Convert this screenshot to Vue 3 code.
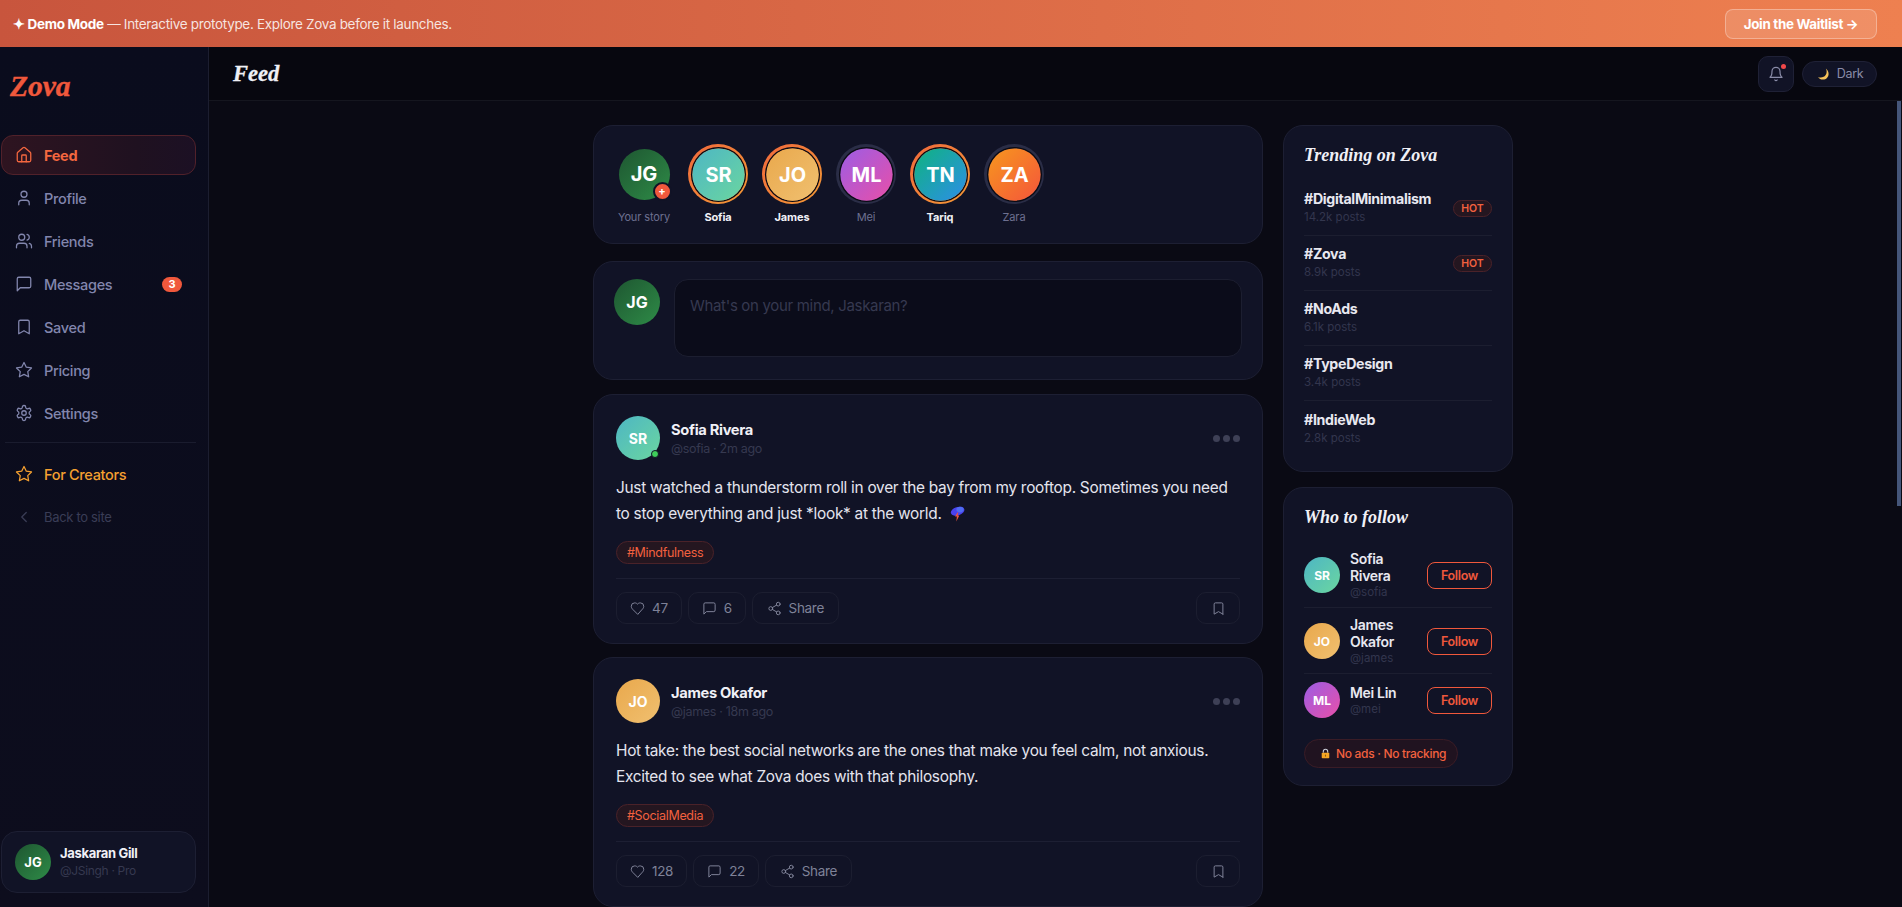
<script setup>
const icons = {
  home: '<path d="M15 21v-8a1 1 0 0 0-1-1h-4a1 1 0 0 0-1 1v8"/><path d="M3 10a2 2 0 0 1 .709-1.528l7-5.999a2 2 0 0 1 2.582 0l7 5.999A2 2 0 0 1 21 10v9a2 2 0 0 1-2 2H5a2 2 0 0 1-2-2z"/>',
  user: '<path d="M19 21v-2a4 4 0 0 0-4-4H9a4 4 0 0 0-4 4v2"/><circle cx="12" cy="7" r="4"/>',
  users: '<path d="M16 21v-2a4 4 0 0 0-4-4H6a4 4 0 0 0-4 4v2"/><circle cx="9" cy="7" r="4"/><path d="M22 21v-2a4 4 0 0 0-3-3.87"/><path d="M16 3.13a4 4 0 0 1 0 7.75"/>',
  message: '<path d="M21 15a2 2 0 0 1-2 2H7l-4 4V5a2 2 0 0 1 2-2h14a2 2 0 0 1 2 2z"/>',
  bookmark: '<path d="m19 21-7-4-7 4V5a2 2 0 0 1 2-2h10a2 2 0 0 1 2 2v16z"/>',
  star: '<polygon points="12 2 15.09 8.26 22 9.27 17 14.14 18.18 21.02 12 17.77 5.82 21.02 7 14.14 2 9.27 8.91 8.26 12 2"/>',
  settings: '<path d="M12.22 2h-.44a2 2 0 0 0-2 2v.18a2 2 0 0 1-1 1.73l-.43.25a2 2 0 0 1-2 0l-.15-.08a2 2 0 0 0-2.73.73l-.22.38a2 2 0 0 0 .73 2.73l.15.1a2 2 0 0 1 1 1.72v.51a2 2 0 0 1-1 1.74l-.15.09a2 2 0 0 0-.73 2.73l.22.38a2 2 0 0 0 2.73.73l.15-.08a2 2 0 0 1 2 0l.43.25a2 2 0 0 1 1 1.73V20a2 2 0 0 0 2 2h.44a2 2 0 0 0 2-2v-.18a2 2 0 0 1 1-1.73l.43-.25a2 2 0 0 1 2 0l.15.08a2 2 0 0 0 2.73-.73l.22-.39a2 2 0 0 0-.73-2.73l-.15-.08a2 2 0 0 1-1-1.74v-.5a2 2 0 0 1 1-1.74l.15-.09a2 2 0 0 0 .73-2.73l-.22-.38a2 2 0 0 0-2.73-.73l-.15.08a2 2 0 0 1-2 0l-.43-.25a2 2 0 0 1-1-1.73V4a2 2 0 0 0-2-2z"/><circle cx="12" cy="12" r="3"/>',
  back: '<path d="m15 18-6-6 6-6"/>',
  bell: '<path d="M6 8a6 6 0 0 1 12 0c0 7 3 9 3 9H3s3-2 3-9"/><path d="M10.3 21a1.94 1.94 0 0 0 3.4 0"/>',
  heart: '<path d="M19 14c1.49-1.46 3-3.21 3-5.5A5.5 5.5 0 0 0 16.5 3c-1.76 0-3 .5-4.5 2-1.5-1.5-2.74-2-4.5-2A5.5 5.5 0 0 0 2 8.5c0 2.3 1.5 4.05 3 5.5l7 7Z"/>',
  share: '<circle cx="18" cy="5" r="3"/><circle cx="6" cy="12" r="3"/><circle cx="18" cy="19" r="3"/><line x1="8.59" y1="13.51" x2="15.42" y2="17.49"/><line x1="15.41" y1="6.51" x2="8.59" y2="10.49"/>',
};

const grads = {
  JG: "linear-gradient(135deg, #1e5631, #2e8b47)",
  SR: "linear-gradient(135deg, #4db6c4, #6bd6a0)",
  JO: "linear-gradient(135deg, #e9a84c, #f0c070)",
  ML: "linear-gradient(135deg, #9b5de5, #e94fa8)",
  TN: "linear-gradient(135deg, #0fb37f, #2d8ee8)",
  ZA: "linear-gradient(135deg, #f7971e, #f4553b)",
};

const navItems = [
  { label: "Feed", icon: "home", active: true },
  { label: "Profile", icon: "user" },
  { label: "Friends", icon: "users" },
  { label: "Messages", icon: "message", badge: 3 },
  { label: "Saved", icon: "bookmark" },
  { label: "Pricing", icon: "star" },
  { label: "Settings", icon: "settings" },
];

const stories = [
  { initials: "SR", name: "Sofia", fresh: true },
  { initials: "JO", name: "James", fresh: true },
  { initials: "ML", name: "Mei", fresh: false },
  { initials: "TN", name: "Tariq", fresh: true },
  { initials: "ZA", name: "Zara", fresh: false },
];

const posts = [
  {
    initials: "SR",
    name: "Sofia Rivera",
    meta: "@sofia · 2m ago",
    online: true,
    text: "Just watched a thunderstorm roll in over the bay from my rooftop. Sometimes you need to stop everything and just *look* at the world.",
    storm: true,
    tag: "#Mindfulness",
    likes: 47,
    comments: 6,
  },
  {
    initials: "JO",
    name: "James Okafor",
    meta: "@james · 18m ago",
    online: false,
    text: "Hot take: the best social networks are the ones that make you feel calm, not anxious. Excited to see what Zova does with that philosophy.",
    storm: false,
    tag: "#SocialMedia",
    likes: 128,
    comments: 22,
  },
];

const trending = [
  { tag: "#DigitalMinimalism", count: "14.2k posts", hot: true },
  { tag: "#Zova", count: "8.9k posts", hot: true },
  { tag: "#NoAds", count: "6.1k posts", hot: false },
  { tag: "#TypeDesign", count: "3.4k posts", hot: false },
  { tag: "#IndieWeb", count: "2.8k posts", hot: false },
];

const suggestions = [
  { initials: "SR", name: "Sofia Rivera", handle: "@sofia" },
  { initials: "JO", name: "James Okafor", handle: "@james" },
  { initials: "ML", name: "Mei Lin", handle: "@mei" },
];
</script>

<template>
  <div class="page">
    <div class="banner">
      <p class="banner-text"><strong>✦ Demo Mode</strong> — Interactive prototype. Explore Zova before it launches.</p>
      <button class="waitlist">Join the Waitlist →</button>
    </div>

    <div class="shell">
      <aside class="sidebar">
        <div class="logo">Zova</div>
        <nav class="nav">
          <a v-for="item in navItems" :key="item.label" class="nav-item" :class="{ active: item.active }">
            <svg class="ico nav-ico" viewBox="0 0 24 24"><g v-html="icons[item.icon]" /></svg>
            <span>{{ item.label }}</span>
            <span v-if="item.badge" class="nav-badge">{{ item.badge }}</span>
          </a>
        </nav>
        <div class="nav-divider"></div>
        <a class="nav-item creators">
          <svg class="ico nav-ico" viewBox="0 0 24 24"><g v-html="icons.star" /></svg>
          <span>For Creators</span>
        </a>
        <a class="nav-item back">
          <svg class="ico nav-ico" viewBox="0 0 24 24"><g v-html="icons.back" /></svg>
          <span>Back to site</span>
        </a>
        <div class="me">
          <div class="avatar me-avatar" :style="{ background: grads.JG }">JG</div>
          <div>
            <div class="me-name">Jaskaran Gill</div>
            <div class="me-sub">@JSingh · Pro</div>
          </div>
        </div>
      </aside>

      <div class="main">
        <header class="topbar">
          <h1 class="page-title">Feed</h1>
          <div class="top-actions">
            <button class="bell">
              <svg class="ico bell-ico" viewBox="0 0 24 24"><g v-html="icons.bell" /></svg>
              <span class="bell-dot"></span>
            </button>
            <button class="theme">
              <svg class="moon" viewBox="0 0 16 16">
                <path d="M11.2 1.6c1.9 3.3 1 7.6-2.5 9.6-2 1.1-4.4 1.1-6.4.2 1.2 1.9 3.4 3.1 5.7 3 3.6 0 6.4-2.9 6.4-6.4 0-2.8-1.5-5.2-3.2-6.4z" fill="#f6c25a" />
              </svg>
              Dark
            </button>
          </div>
        </header>

        <div class="scroll">
          <div class="columns">
            <section class="feed">
              <div class="card stories">
                <div class="story">
                  <div class="story-ring plain">
                    <div class="avatar story-own" :style="{ background: grads.JG }">
                      JG
                      <span class="story-plus">+</span>
                    </div>
                  </div>
                  <span class="story-name">Your story</span>
                </div>
                <div v-for="s in stories" :key="s.initials" class="story">
                  <div class="story-ring" :class="s.fresh ? 'fresh' : 'seen'">
                    <div class="avatar story-avatar" :style="{ background: grads[s.initials] }">{{ s.initials }}</div>
                  </div>
                  <span class="story-name" :class="{ unread: s.fresh }">{{ s.name }}</span>
                </div>
              </div>

              <div class="card compose">
                <div class="avatar compose-avatar" :style="{ background: grads.JG }">JG</div>
                <div class="compose-box">What's on your mind, Jaskaran?</div>
              </div>

              <article v-for="post in posts" :key="post.name" class="card post">
                <div class="post-head">
                  <div class="avatar post-avatar" :style="{ background: grads[post.initials] }">
                    {{ post.initials }}
                    <span v-if="post.online" class="online"></span>
                  </div>
                  <div class="post-who">
                    <div class="post-name">{{ post.name }}</div>
                    <div class="post-meta">{{ post.meta }}</div>
                  </div>
                  <div class="post-more"><i></i><i></i><i></i></div>
                </div>
                <p class="post-text">
                  {{ post.text }}
                  <svg v-if="post.storm" class="storm" viewBox="0 0 16 16">
                    <ellipse cx="8.6" cy="5.2" rx="7" ry="4.2" transform="rotate(-18 8.6 5.2)" fill="#4a42ee" />
                    <ellipse cx="11" cy="3.6" rx="3.6" ry="2.8" fill="#4f6cf2" />
                    <path d="M8.6 6.6 6 10.6h1.9L7.3 15.6l3-6H8.5l.9-3z" fill="#f0563c" />
                  </svg>
                </p>
                <span class="post-tag">{{ post.tag }}</span>
                <div class="post-actions">
                  <button class="act">
                    <svg class="ico act-ico" viewBox="0 0 24 24"><g v-html="icons.heart" /></svg>
                    {{ post.likes }}
                  </button>
                  <button class="act">
                    <svg class="ico act-ico" viewBox="0 0 24 24"><g v-html="icons.message" /></svg>
                    {{ post.comments }}
                  </button>
                  <button class="act act-share">
                    <svg class="ico act-ico" viewBox="0 0 24 24"><g v-html="icons.share" /></svg>
                    Share
                  </button>
                  <button class="act act-save">
                    <svg class="ico act-ico" viewBox="0 0 24 24"><g v-html="icons.bookmark" /></svg>
                  </button>
                </div>
              </article>
            </section>

            <aside class="rail">
              <div class="card widget">
                <h3 class="widget-title">Trending on Zova</h3>
                <div v-for="t in trending" :key="t.tag" class="trend">
                  <div>
                    <div class="trend-tag">{{ t.tag }}</div>
                    <div class="trend-count">{{ t.count }}</div>
                  </div>
                  <span v-if="t.hot" class="hot">HOT</span>
                </div>
              </div>

              <div class="card widget">
                <h3 class="widget-title follow-title">Who to follow</h3>
                <div v-for="s in suggestions" :key="s.handle" class="suggest">
                  <div class="avatar suggest-avatar" :style="{ background: grads[s.initials] }">{{ s.initials }}</div>
                  <div class="suggest-who">
                    <div class="suggest-name">{{ s.name }}</div>
                    <div class="suggest-handle">{{ s.handle }}</div>
                  </div>
                  <button class="follow">Follow</button>
                </div>
                <div class="privacy">
                  <svg class="lock" viewBox="0 0 16 16">
                    <path d="M4.8 7V5a3.2 3.2 0 0 1 6.4 0v2" fill="none" stroke="#c9ccd6" stroke-width="1.6" />
                    <rect x="2.5" y="6.8" width="11" height="8.2" rx="1.2" fill="#f5a524" />
                    <rect x="7.2" y="9.6" width="1.6" height="3" rx=".8" fill="#8a5a10" />
                  </svg>
                  No ads · No tracking
                </div>
              </div>
            </aside>
          </div>
        </div>
        <div class="scroll-thumb"></div>
      </div>
    </div>
  </div>
</template>

<style>
html,
body {
  margin: 0;
  overflow: hidden;
  background: #0a0a14;
}
</style>

<style scoped>
.page {
  height: 907px;
  display: flex;
  flex-direction: column;
  overflow: hidden;
  font-family: Inter, "Noto Sans", sans-serif;
  letter-spacing: -0.02em;
  color: #e8e8f0;
  background: #0a0a14;
}
button {
  font-family: inherit;
  letter-spacing: inherit;
  cursor: pointer;
}
.ico {
  fill: none;
  stroke: currentColor;
  stroke-width: 1.8;
  stroke-linecap: round;
  stroke-linejoin: round;
  flex-shrink: 0;
}

/* banner */
.banner {
  height: 47px;
  flex-shrink: 0;
  display: flex;
  align-items: center;
  justify-content: space-between;
  padding: 0 25px 0 13px;
  background: linear-gradient(90deg, #c8553d, #ee8050);
}
.banner-text {
  margin: 0;
  font-size: 13.5px;
  color: rgba(255, 255, 255, 0.85);
}
.banner-text strong {
  color: #fff;
  font-weight: 700;
}
.waitlist {
  width: 152px;
  height: 30px;
  border-radius: 8px;
  border: 1px solid rgba(255, 255, 255, 0.3);
  background: rgba(255, 255, 255, 0.13);
  color: #fff;
  font-size: 13.4px;
  font-weight: 700;
  padding: 0;
}

.shell {
  flex: 1;
  display: flex;
  min-height: 0;
}

/* sidebar */
.sidebar {
  width: 209px;
  flex-shrink: 0;
  box-sizing: border-box;
  border-right: 1px solid #1c1e30;
  background: linear-gradient(180deg, #0a0c1d, #0d0d1d);
  padding: 0 12px 14px 1px;
  display: flex;
  flex-direction: column;
}
.logo {
  font-family: "Liberation Serif", serif;
  font-style: italic;
  font-weight: 700;
  font-size: 29.5px;
  letter-spacing: 0;
  -webkit-text-stroke: 0.4px #f0583c;
  color: #f0583c;
  padding: 23px 0 0 9px;
  height: 65px;
  box-sizing: border-box;
  line-height: 32px;
  margin-bottom: 23px;
}
.nav {
  display: flex;
  flex-direction: column;
  gap: 3px;
}
.nav-item {
  height: 40px;
  box-sizing: border-box;
  border: 1px solid transparent;
  border-radius: 12px;
  display: flex;
  align-items: center;
  gap: 11px;
  padding: 0 13px;
  font-size: 14.5px;
  font-weight: 500;
  color: #8286ad;
}
.nav-ico {
  width: 18px;
  height: 18px;
  stroke-width: 1.7;
}
.nav-item.active {
  color: #f4673f;
  font-weight: 700;
  background: linear-gradient(90deg, #2e1420, #1f1120 70%, #1c1024);
  border-color: #51212a;
}
.nav-badge {
  margin-left: auto;
  min-width: 20px;
  height: 15px;
  border-radius: 8px;
  background: #f0583c;
  color: #fff;
  font-size: 11px;
  font-weight: 700;
  text-align: center;
  line-height: 15px;
}
.nav-divider {
  height: 1px;
  background: #1a1c2e;
  margin: 9px 0 11px 4px;
}
.creators {
  color: #f5a030;
  margin-bottom: 3px;
}
.back {
  color: #3a3d56;
  font-size: 13px;
  font-weight: 400;
}
.avatar {
  border-radius: 50%;
  display: flex;
  align-items: center;
  justify-content: center;
  color: #fff;
  font-weight: 700;
  letter-spacing: 0;
  position: relative;
  flex-shrink: 0;
}
.me {
  margin-top: auto;
  height: 62px;
  box-sizing: border-box;
  border: 1px solid #1d1f33;
  border-radius: 16px;
  background: #111326;
  display: flex;
  align-items: center;
  gap: 9px;
  padding: 0 13px;
}
.me-avatar {
  width: 36px;
  height: 36px;
  font-size: 13px;
}
.me-name {
  font-size: 13px;
  font-weight: 700;
  color: #f0f0f6;
  line-height: 17px;
}
.me-sub {
  font-size: 12px;
  color: #363950;
  line-height: 17px;
}

/* main column */
.main {
  flex: 1;
  min-width: 0;
  display: flex;
  flex-direction: column;
  position: relative;
  background: #0a0a14;
}
.topbar {
  height: 54px;
  flex-shrink: 0;
  box-sizing: border-box;
  border-bottom: 1px solid #15161f;
  background: #07070f;
  display: flex;
  align-items: center;
  justify-content: space-between;
  padding: 0 25px 0 24px;
}
.page-title {
  margin: 0;
  font-family: "Liberation Serif", serif;
  font-style: italic;
  font-weight: 700;
  font-size: 22.5px;
  letter-spacing: 0;
  -webkit-text-stroke: 0.3px #f0f0f6;
  color: #f0f0f6;
}
.top-actions {
  display: flex;
  align-items: center;
  gap: 8px;
}
.bell {
  width: 36px;
  height: 36px;
  border-radius: 10px;
  border: 1px solid #1f2136;
  background: #111326;
  color: #8a8ca8;
  position: relative;
  display: flex;
  align-items: center;
  justify-content: center;
  padding: 0;
}
.bell-ico {
  width: 16px;
  height: 16px;
}
.bell-dot {
  position: absolute;
  top: 7px;
  right: 7px;
  width: 5px;
  height: 5px;
  border-radius: 50%;
  background: #f0484a;
}
.theme {
  width: 75px;
  height: 26px;
  border-radius: 13px;
  border: 1px solid #1f2136;
  background: #111326;
  color: #8a8ca8;
  font-size: 12.5px;
  display: flex;
  align-items: center;
  justify-content: center;
  gap: 7px;
  padding: 0;
}
.moon {
  width: 14px;
  height: 14px;
}

.scroll {
  flex: 1;
  overflow: hidden;
  padding: 24px 5px 0 0;
}
.columns {
  width: 920px;
  margin: 0 auto;
  display: flex;
  gap: 20px;
  align-items: flex-start;
}
.feed {
  width: 670px;
  flex-shrink: 0;
  display: flex;
  flex-direction: column;
}
.rail {
  width: 230px;
  flex-shrink: 0;
  display: flex;
  flex-direction: column;
  gap: 15px;
}
.scroll-thumb {
  position: absolute;
  right: 1px;
  top: 54px;
  width: 4px;
  height: 405px;
  background: #45567a;
}
.card {
  box-sizing: border-box;
  border: 1px solid #1d1f33;
  border-radius: 20px;
  background: #111326;
}

/* stories */
.stories {
  height: 119px;
  margin-bottom: 17px;
  padding: 18px 20px;
  display: flex;
  gap: 14px;
}
.story {
  width: 60px;
  display: flex;
  flex-direction: column;
  align-items: center;
  gap: 7px;
}
.story-ring {
  width: 60px;
  height: 60px;
  box-sizing: border-box;
  border-radius: 50%;
  display: flex;
  align-items: center;
  justify-content: center;
}
.story-ring.fresh {
  background: linear-gradient(135deg, #f0683c, #f59a35);
  padding: 2.5px;
}
.story-ring.seen {
  background: #2a2d46;
  padding: 2.5px;
}
.story-avatar {
  width: 100%;
  height: 100%;
  box-sizing: border-box;
  font-size: 21px;
  box-shadow: 0 0 0 1.5px #0a0a14;
  transform: scale(0.95);
}
.story-own {
  width: 51px;
  height: 51px;
  font-size: 20px;
}
.story-plus {
  position: absolute;
  right: -2px;
  bottom: -1px;
  width: 15px;
  height: 15px;
  border-radius: 50%;
  background: #f0583c;
  border: 2px solid #111326;
  font-size: 11px;
  line-height: 15px;
  text-align: center;
}
.story-name {
  font-size: 11px;
  color: #6d7090;
  white-space: nowrap;
  line-height: 13px;
  letter-spacing: -0.01em;
}
.story-name.unread {
  color: #f0f0f6;
  font-weight: 700;
}

/* compose */
.compose {
  height: 119px;
  margin-bottom: 14px;
  padding: 17px 20px;
  display: flex;
  gap: 14px;
}
.compose-avatar {
  width: 46px;
  height: 46px;
  font-size: 16px;
}
.compose-box {
  flex: 1;
  height: 78px;
  box-sizing: border-box;
  border: 1px solid #1c1e30;
  border-radius: 14px;
  background: #0b0c1a;
  color: #363950;
  font-size: 15px;
  padding: 16px 15px;
}

/* posts */
.post {
  height: 250px;
  margin-bottom: 13px;
  padding: 21px 22px 0;
}
.post-head {
  display: flex;
  align-items: center;
  gap: 11px;
}
.post-avatar {
  width: 44px;
  height: 44px;
  font-size: 14px;
}
.online {
  position: absolute;
  right: 1px;
  bottom: 2px;
  width: 6px;
  height: 6px;
  border-radius: 50%;
  background: #3ecf5a;
  border: 1.5px solid #111326;
}
.post-who {
  flex: 1;
}
.post-name {
  font-size: 14.7px;
  font-weight: 700;
  color: #f0f0f6;
  line-height: 20px;
}
.post-meta {
  font-size: 12.5px;
  color: #363950;
  line-height: 17px;
}
.post-more {
  display: flex;
  gap: 3px;
}
.post-more i {
  width: 7px;
  height: 7px;
  border-radius: 50%;
  background: #3e4056;
}
.post-text {
  margin: 15px 0 0;
  font-size: 15.4px;
  line-height: 26px;
  letter-spacing: -0.018em;
  color: #e4e4ee;
}
.storm {
  width: 16px;
  height: 16px;
  vertical-align: -3px;
  margin-left: 3px;
}
.post-tag {
  display: inline-block;
  margin-top: 14px;
  height: 23px;
  box-sizing: border-box;
  border: 1px solid #4a2229;
  border-radius: 12px;
  background: #241620;
  color: #f2613f;
  font-size: 12.5px;
  line-height: 21px;
  padding: 0 10px;
}
.post-actions {
  margin-top: 14px;
  padding-top: 13px;
  border-top: 1px solid #1d1f33;
  display: flex;
  gap: 6px;
}
.act {
  height: 32px;
  box-sizing: border-box;
  border: 1px solid #1c1e30;
  border-radius: 10px;
  background: transparent;
  color: #7f8298;
  font-size: 13.5px;
  display: flex;
  align-items: center;
  gap: 7px;
  padding: 0 13px;
}
.act-share {
  min-width: 87px;
  justify-content: center;
}
.act-ico {
  width: 15px;
  height: 15px;
  stroke-width: 1.6;
}
.act-save {
  margin-left: auto;
  width: 44px;
  justify-content: center;
  padding: 0;
}

/* right rail */
.widget {
  padding: 18px 20px 15px;
}
.widget-title {
  margin: 0 0 15px;
  font-family: "Liberation Serif", serif;
  font-style: italic;
  font-weight: 700;
  font-size: 18px;
  letter-spacing: 0;
  line-height: 22px;
  color: #f0f0f6;
}
.trend {
  height: 55px;
  box-sizing: border-box;
  border-bottom: 1px solid #1c1e30;
  display: flex;
  align-items: center;
  justify-content: space-between;
}
.trend:last-child {
  border-bottom: none;
}
.trend-tag {
  font-size: 14.2px;
  font-weight: 700;
  color: #e8e8f0;
  line-height: 18px;
}
.trend-count {
  font-size: 11.5px;
  color: #33364e;
  line-height: 18px;
  letter-spacing: 0;
}
.hot {
  width: 39px;
  height: 17px;
  box-sizing: border-box;
  border: 1px solid #4a2229;
  border-radius: 9px;
  background: #241620;
  color: #f2613f;
  font-size: 10.5px;
  font-weight: 600;
  text-align: center;
  line-height: 15px;
  letter-spacing: 0;
}
.follow-title {
  margin-bottom: 14px;
}
.suggest {
  display: flex;
  align-items: center;
  gap: 10px;
  border-bottom: 1px solid #1c1e30;
  padding: 8px 0 7px;
}
.suggest:nth-last-child(2) {
  border-bottom: none;
}
.suggest-avatar {
  width: 36px;
  height: 36px;
  font-size: 12px;
}
.suggest-who {
  flex: 1;
  min-width: 0;
}
.suggest-name {
  font-size: 14px;
  font-weight: 600;
  color: #e8e8f0;
  line-height: 17px;
}
.suggest-handle {
  font-size: 11.5px;
  color: #33364e;
  line-height: 16px;
  letter-spacing: 0;
}
.follow {
  width: 65px;
  height: 27px;
  flex-shrink: 0;
  border: 1px solid #f0583c;
  border-radius: 8px;
  background: transparent;
  color: #f0583c;
  font-size: 12.5px;
  font-weight: 600;
  padding: 0;
}
.privacy {
  display: inline-flex;
  align-items: center;
  gap: 5px;
  height: 29px;
  width: 154px;
  box-sizing: border-box;
  margin: 14px 0 2px;
  padding-left: 15px;
  border: 1px solid #3a1c26;
  border-radius: 15px;
  background: #201320;
  color: #f2613f;
  font-size: 12px;
  font-weight: 500;
  white-space: nowrap;
}
.lock {
  width: 11px;
  height: 11px;
  flex-shrink: 0;
}
</style>
